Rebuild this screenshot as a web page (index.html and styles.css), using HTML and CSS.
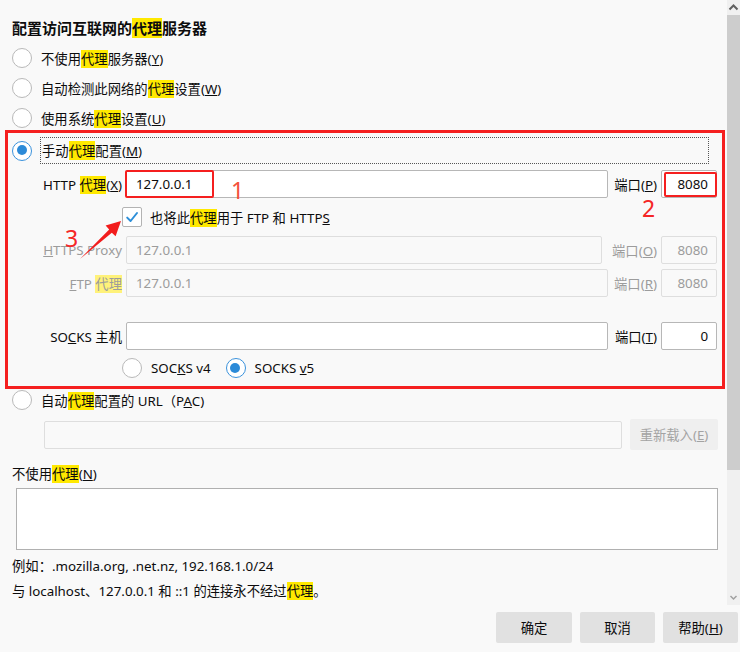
FILE: index.html
```html
<!DOCTYPE html>
<html lang="zh-CN">
<head>
<meta charset="utf-8">
<title>连接设置</title>
<link rel="stylesheet" href="styles.css">
</head>
<body>
<div class="window">
  <div class="main">
    <div class="content">
      <h1 class="title">配置访问互联网的<mark>代理</mark>服务器</h1>
      <div class="options">
        <div class="radio-row"><span class="radio"></span><span>不使用<mark>代理</mark>服务器(<u>Y</u>)</span></div>
        <div class="radio-row"><span class="radio"></span><span>自动检测此网络的<mark>代理</mark>设置(<u>W</u>)</span></div>
        <div class="radio-row"><span class="radio"></span><span>使用系统<mark>代理</mark>设置(<u>U</u>)</span></div>
      </div>

      <div class="manual">
        <div class="radio-row head"><span class="radio checked"></span><span class="focus-label">手动<mark>代理</mark>配置(<u>M</u>)</span></div>

        <div class="proxy-row first">
          <span class="lbl">HTTP <mark>代理</mark>(<u>X</u>)</span>
          <div class="field"><span class="annot-box"></span>127.0.0.1</div>
          <span class="lbl">端口(<u>P</u>)</span>
          <div class="field port"><span class="annot-box small"></span>8080</div>
        </div>

        <div class="check-row">
          <span class="checkbox"><svg width="18" height="18" viewBox="0 0 18 18"><path d="M4.2 9.6 L7.6 13 L14 5" fill="none" stroke="#2d8fd9" stroke-width="2" stroke-linecap="round" stroke-linejoin="round"/></svg></span>
          <span>也将此<mark>代理</mark>用于 FTP 和 HTTP<u>S</u></span>
        </div>

        <div class="proxy-row disabled">
          <span class="lbl"><u>H</u>TTPS Proxy</span>
          <div class="field dis narrow">127.0.0.1</div>
          <span class="lbl">端口(<u>O</u>)</span>
          <div class="field port dis">8080</div>
        </div>

        <div class="proxy-row disabled gap5">
          <span class="lbl"><u>F</u>TP <mark class="pale">代理</mark></span>
          <div class="field dis">127.0.0.1</div>
          <span class="lbl">端口(<u>R</u>)</span>
          <div class="field port dis">8080</div>
        </div>

        <div class="proxy-row gap25">
          <span class="lbl">SO<u>C</u>KS 主机</span>
          <div class="field"></div>
          <span class="lbl">端口(<u>T</u>)</span>
          <div class="field port">0</div>
        </div>

        <div class="socks-row">
          <span class="radio"></span><span class="socks-txt">SOC<u>K</u>S v4</span>
          <span class="radio checked"></span><span>SOCKS <u>v</u>5</span>
        </div>
      </div>

      <div class="radio-row pac"><span class="radio"></span><span>自动<mark>代理</mark>配置的 URL（P<u>A</u>C)</span></div>
      <div class="pac-row">
        <div class="field dis pac-field"></div>
        <button class="btn reload">重新载入(<u>E</u>)</button>
      </div>

      <div class="noproxy-label">不使用<mark>代理</mark>(<u>N</u>)</div>
      <div class="textarea"></div>
      <div class="hint">例如：.mozilla.org, .net.nz, 192.168.1.0/24</div>
      <div class="hint">与 localhost、127.0.0.1 和 ::1 的连接永不经过<mark>代理</mark>。</div>
    </div>

    <div class="scrollbar">
      <div class="sb-btn"><svg width="13" height="15" viewBox="0 0 13 15"><path d="M2.5 9.5 L6.5 5.5 L10.5 9.5" fill="none" stroke="#606060" stroke-width="2"/></svg></div>
      <div class="sb-thumb"></div>
      <div class="sb-track"></div>
      <div class="sb-btn down"><svg width="13" height="15" viewBox="0 0 13 15"><path d="M3.5 6 L6.5 9 L9.5 6" fill="none" stroke="#a0a0a0" stroke-width="1.5"/></svg></div>
    </div>
  </div>

  <div class="footer">
    <button class="btn ok">确定</button>
    <button class="btn">取消</button>
    <button class="btn">帮助(<u>H</u>)</button>
  </div>

  <div class="annotations">
    <span class="num n1">1</span>
    <span class="num n2">2</span>
    <span class="num n3">3</span>
    <svg class="arrow" width="740" height="652" viewBox="0 0 740 652">
      <polygon points="80,259 111.8,232.8 115.6,236.2 121,221 105.6,225.6 109.2,229.4" fill="#f21d1d"/>
    </svg>
  </div>
</div>
</body>
</html>
```

FILE: styles.css
```css
body {
  margin: 0;
  background: #f9f9f9;
  font-family: "Noto Sans", "Noto Sans CJK SC", sans-serif;
  font-size: 13.33px;
  color: #0c0c0d;
}

mark {
  background: #ffe900;
  color: inherit;
}

mark.pale {
  background: #fff27a;
}

.window {
  position: relative;
  width: 740px;
  height: 652px;
  display: flex;
  flex-direction: column;
  overflow: hidden;
}

.main {
  display: flex;
  height: 605px;
}

.content {
  width: 727px;
  box-sizing: border-box;
  padding: 16px 2px 0 12px;
}

.title {
  margin: 0;
  font-size: 15px;
  font-weight: bold;
  line-height: 24px;
  height: 24px;
}

.options {
  margin-top: 3px;
}

.radio-row {
  display: flex;
  align-items: center;
  gap: 9px;
  height: 30px;
}

.radio {
  position: relative;
  flex: none;
  width: 20px;
  height: 20px;
  box-sizing: border-box;
  border: 1px solid #b9b9b9;
  border-radius: 50%;
  background: #fff;
}

.radio.checked {
  border: 1.5px solid #3a92dc;
}

.radio.checked::after {
  content: "";
  position: absolute;
  left: 3.5px;
  top: 3.5px;
  width: 10px;
  height: 10px;
  border-radius: 50%;
  background: #2b8ad8;
}

.manual {
  margin: -3px 0 0 -7px;
  border: 3px solid #f51f1f;
  padding: 4px 0 6px 4px;
}

.radio-row.head {
  height: 27px;
}

.focus-label {
  flex: 1;
  align-self: stretch;
  display: flex;
  align-items: center;
  margin-left: -1px;
  margin-right: 13px;
  padding-left: 1px;
  border: 1px dotted #555;
}

.proxy-row {
  display: grid;
  grid-template-columns: 92px 482px 45px 56px;
  column-gap: 4px;
  align-items: center;
  height: 28px;
  margin-left: 18px;
}

.proxy-row.first {
  margin-top: 6px;
}

.proxy-row.gap5 {
  margin-top: 5px;
}

.proxy-row.gap25 {
  margin-top: 25px;
}

.lbl {
  text-align: right;
  white-space: nowrap;
}

.proxy-row.disabled .lbl {
  color: #9c9c9c;
}

.field {
  position: relative;
  height: 28px;
  box-sizing: border-box;
  border: 1px solid #b7b7b7;
  border-radius: 2px;
  background: #fff;
  display: flex;
  align-items: center;
  padding: 0 9px;
}

.field.dis {
  background: #f9f9f9;
  border-color: #dedede;
  color: #9c9c9c;
}

.field.narrow {
  margin-right: 6px;
}

.field.port {
  justify-content: flex-end;
  padding-right: 8px;
}

.annot-box {
  position: absolute;
  left: -2px;
  top: -1px;
  width: 89px;
  height: 28px;
  box-sizing: border-box;
  border: 2.5px solid #f51f1f;
  border-radius: 2px;
}

.annot-box.small {
  left: 2px;
  top: 1px;
  width: 53px;
  height: 25px;
}

.check-row {
  display: flex;
  align-items: center;
  gap: 8px;
  height: 38px;
  margin-left: 110px;
}

.checkbox {
  width: 20px;
  height: 20px;
  box-sizing: border-box;
  border: 1px solid #b3b3b3;
  border-radius: 2px;
  background: #fff;
  display: flex;
  align-items: center;
  justify-content: center;
}

.socks-row {
  display: flex;
  align-items: center;
  gap: 9px;
  height: 24px;
  margin-top: 6px;
  margin-left: 110px;
}

.socks-txt {
  margin-right: 6px;
}

.radio-row.pac {
  height: 22px;
}

.pac-row {
  display: flex;
  align-items: center;
  gap: 8px;
  height: 31px;
  margin-top: 8px;
  margin-left: 32px;
}

.pac-field {
  width: 578px;
}

.btn {
  height: 31px;
  border: none;
  border-radius: 2px;
  background: #e1e1e1;
  font: inherit;
  color: #0c0c0d;
  padding: 0;
}

.btn.reload {
  width: 88px;
  background: #efefef;
  color: #a3a3a3;
}

.noproxy-label {
  margin-top: 14px;
  line-height: 20px;
}

.textarea {
  width: 702px;
  height: 62px;
  box-sizing: border-box;
  margin: 4px 0 0 4px;
  border: 1px solid #b0b0b0;
  background: #fff;
}

.hint {
  line-height: 25px;
}

.textarea + .hint {
  margin-top: 4px;
}

.scrollbar {
  width: 13px;
  display: flex;
  flex-direction: column;
  background: #f0f0f0;
}

.sb-btn {
  height: 15px;
  flex: none;
}

.sb-btn svg {
  display: block;
}

.sb-thumb {
  height: 455px;
  background: #cdcdcd;
}

.sb-track {
  flex: 1;
}

.footer {
  display: flex;
  justify-content: flex-end;
  gap: 8px;
  padding: 7px 2px 0 0;
}

.footer .btn {
  width: 75px;
}

.footer .btn.ok {
  width: 76px;
}

.annotations {
  position: absolute;
  left: 0;
  top: 0;
  width: 740px;
  height: 652px;
  pointer-events: none;
}

.arrow {
  position: absolute;
  left: 0;
  top: 0;
}

.num {
  position: absolute;
  font-family: "Noto Sans", sans-serif;
  font-size: 23px;
  line-height: 24px;
  color: #f52626;
}

.n1 {
  left: 231px;
  top: 178px;
  color: #f4503a;
}

.n2 {
  left: 642px;
  top: 196px;
}

.n3 {
  left: 65px;
  top: 226px;
}
```
